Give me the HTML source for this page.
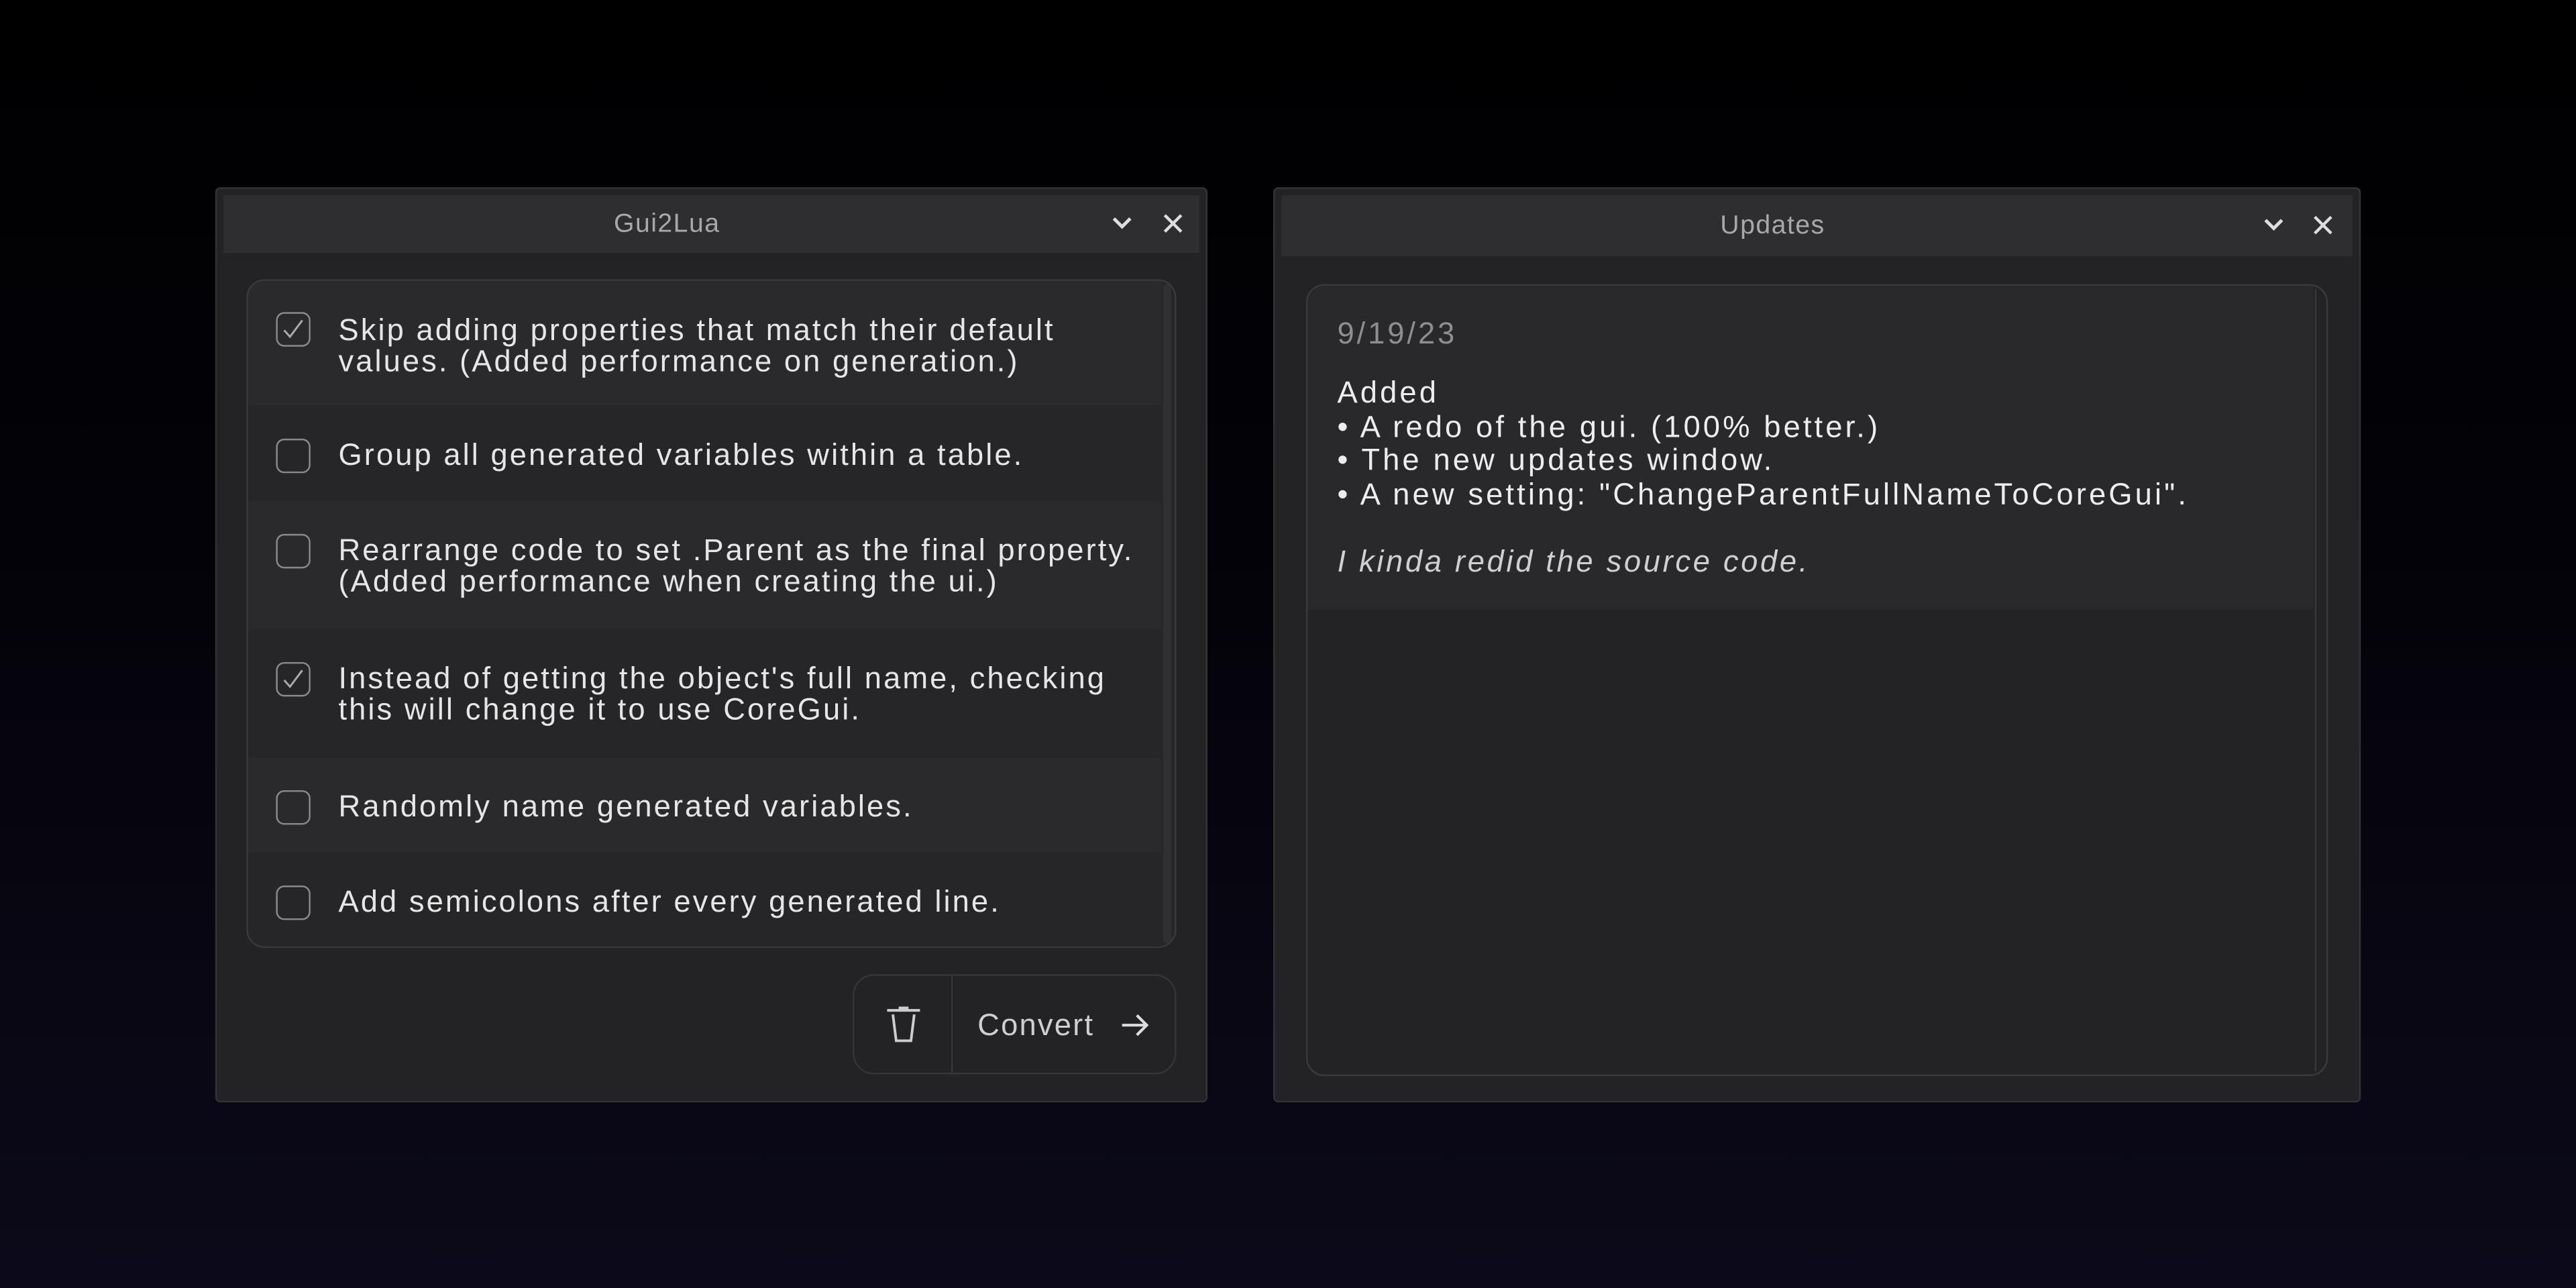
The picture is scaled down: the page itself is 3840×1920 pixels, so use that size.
<!DOCTYPE html>
<html><head><meta charset="utf-8"><style>
*{margin:0;padding:0;box-sizing:border-box}
html,body{width:3840px;height:1920px;overflow:hidden}
body{background:linear-gradient(180deg,#000 0%,#030208 40%,#0c0a1a 100%);font-family:"Liberation Sans",sans-serif}
#s{position:absolute;left:0;top:0;width:1568px;height:784px;transform:scale(2.44898);transform-origin:0 0}
.win{position:absolute;background:#232326;border:1px solid #333336;border-radius:3px}
.tb{position:absolute;left:4px;right:4px;top:4px;background:#2e2e31;color:#a8a8ac;font-size:16px;text-align:center;padding-right:54px;letter-spacing:.6px}
.ic{position:absolute;top:0;color:#d8d8d8}
.panel{position:absolute;border:1px solid #3a3a3d;border-radius:11px;overflow:hidden;background:#262629}
.row{position:absolute;left:0;right:8px;color:#e6e6e6;font-size:18.5px;line-height:19px;letter-spacing:1.25px;white-space:nowrap}
.cb{position:absolute;left:17px;width:21px;height:21px;border:1.5px solid #8a8a8e;border-radius:5px}
.cb svg{position:absolute;left:3px;top:3px}
.txt{position:absolute;left:55px}
.sb{position:absolute;right:2px;top:2px;bottom:2px;width:5px;background:#303033;border-radius:2px}
</style></head><body><div id="s">

<div class="win" style="left:131px;top:114px;width:604px;height:557px">
 <div class="tb" style="height:35px;line-height:36px">Gui2Lua
  <svg class="ic" style="left:540px;top:12px" width="14" height="10" viewBox="0 0 14 10"><path d="M2 2l5 5 5-5" stroke="#ddd" stroke-width="2" fill="none"/></svg>
  <svg class="ic" style="left:571px;top:10px" width="14" height="14" viewBox="0 0 14 14"><path d="M2 2l10 10M12 2L2 12" stroke="#ddd" stroke-width="1.8"/></svg>
 </div>
 <div class="panel" style="left:18px;top:55px;width:566px;height:407px">
  <div class="row" style="top:0;height:76px;background:#2a2a2d"><div class="cb" style="top:19px"><svg width="13" height="13" viewBox="0 0 13 13"><path d="M1 7l3.5 4L12 1" stroke="#aaa" stroke-width="1.2" fill="none"/></svg></div><div class="txt" style="top:20px">Skip adding properties that match their default<br>values. (Added performance on generation.)</div></div>
  <div class="row" style="top:76px;height:58px;background:#262629"><div class="cb" style="top:20px"></div><div class="txt" style="top:20px">Group all generated variables within a table.</div></div>
  <div class="row" style="top:134px;height:78px;background:#2a2a2d"><div class="cb" style="top:20px"></div><div class="txt" style="top:20px">Rearrange code to set .Parent as the final property.<br>(Added performance when creating the ui.)</div></div>
  <div class="row" style="top:212px;height:78px;background:#262629"><div class="cb" style="top:20px"><svg width="13" height="13" viewBox="0 0 13 13"><path d="M1 7l3.5 4L12 1" stroke="#aaa" stroke-width="1.2" fill="none"/></svg></div><div class="txt" style="top:20px">Instead of getting the object's full name, checking<br>this will change it to use CoreGui.</div></div>
  <div class="row" style="top:290px;height:58px;background:#2a2a2d"><div class="cb" style="top:20px"></div><div class="txt" style="top:20px">Randomly name generated variables.</div></div>
  <div class="row" style="top:348px;height:59px;background:#262629"><div class="cb" style="top:20px"></div><div class="txt" style="top:20px">Add semicolons after every generated line.</div></div>
  <div class="sb"></div>
 </div>
 <div style="position:absolute;left:387px;top:478px;width:197px;height:61px;border:1px solid #353538;border-radius:13px">
  <div style="position:absolute;left:59px;top:0;bottom:0;width:1px;background:#353538"></div>
  <svg style="position:absolute;left:19px;top:18px" width="22" height="25" viewBox="0 0 22 25"><path d="M1 3h20M8 1.5h6M4.5 5.5l2 16h9l2-16" stroke="#ccc" stroke-width="1.6" fill="none"/></svg>
  <div style="position:absolute;left:75px;top:19px;color:#cfcfd2;font-size:18.5px;letter-spacing:.9px">Convert</div>
  <svg style="position:absolute;left:162px;top:21px" width="18" height="18" viewBox="0 0 18 18"><path d="M1 9h15M10 3l6 6-6 6" stroke="#ddd" stroke-width="1.7" fill="none"/></svg>
 </div>
</div>

<div class="win" style="left:775px;top:114px;width:662px;height:557px">
 <div class="tb" style="height:37px;line-height:38px">Updates
  <svg class="ic" style="left:597px;top:13px" width="14" height="10" viewBox="0 0 14 10"><path d="M2 2l5 5 5-5" stroke="#ddd" stroke-width="2" fill="none"/></svg>
  <svg class="ic" style="left:627px;top:11px" width="14" height="14" viewBox="0 0 14 14"><path d="M2 2l10 10M12 2L2 12" stroke="#ddd" stroke-width="1.8"/></svg>
 </div>
 <div class="panel" style="left:19px;top:58px;width:622px;height:482px;background:#232326">
  <div style="position:absolute;left:0;right:8px;top:0;height:197px;background:#29292c"></div>
  <div style="position:absolute;right:6px;top:2px;bottom:2px;width:1px;background:#38383b"></div>
  <div style="position:absolute;left:18px;top:18px;color:#8e8e92;font-size:18.5px;letter-spacing:1.6px">9/19/23</div>
  <div style="position:absolute;left:18px;top:55px;color:#ededed;font-size:18.5px;line-height:20.5px;letter-spacing:1.68px;white-space:nowrap">Added<br>• A redo of the gui. (100% better.)<br>• The new updates window.<br>• A new setting: "ChangeParentFullNameToCoreGui".<br><br><i style="color:#d0d0d3;letter-spacing:1.5px">I kinda redid the source code.</i></div>
 </div>
</div>

</div></body></html>
